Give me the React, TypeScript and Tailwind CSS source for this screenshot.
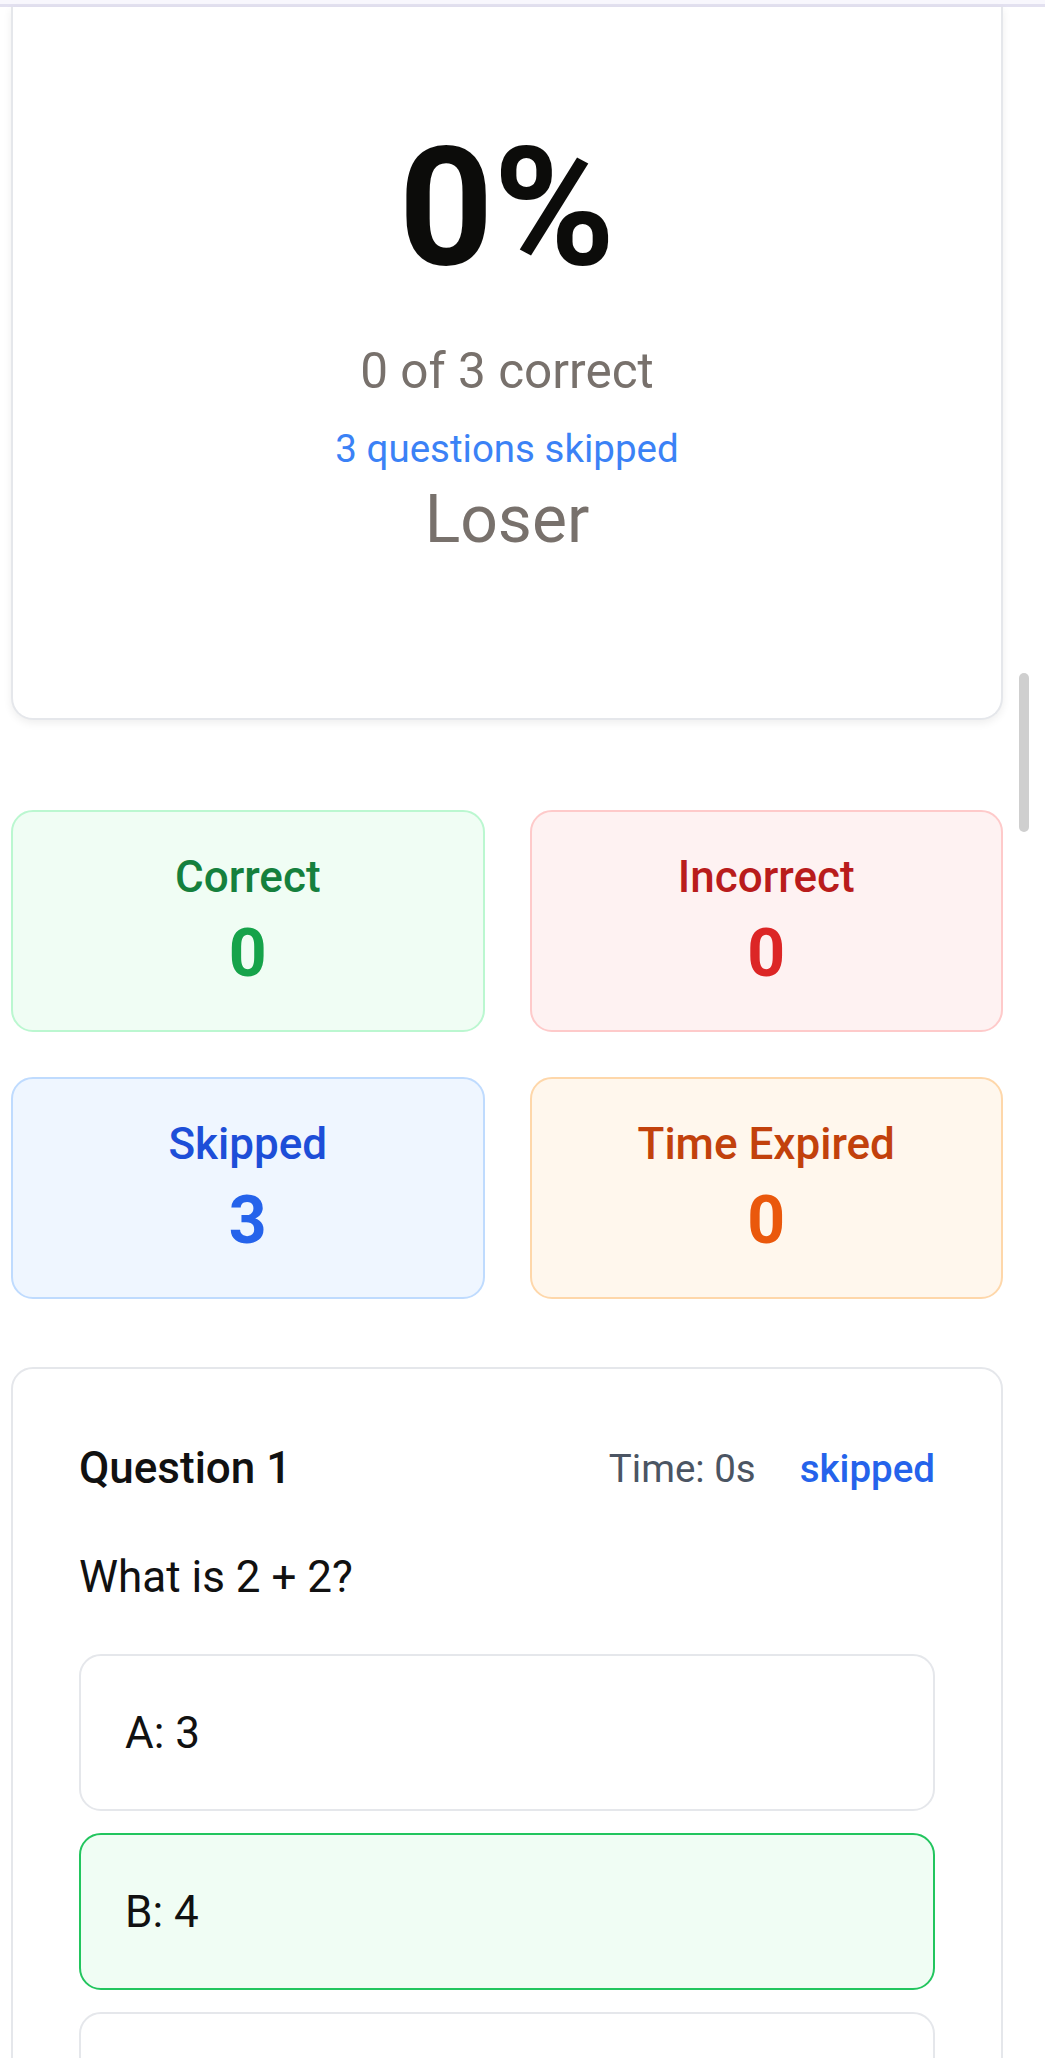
import React from "react";

const stats = [
  { label: "Correct", value: "0", box: "bg-[#f0fdf4] border-[#bbf7d0]", title: "text-[#15803d]", num: "text-[#16a34a]" },
  { label: "Incorrect", value: "0", box: "bg-[#fef2f2] border-[#fecaca]", title: "text-[#b91c1c]", num: "text-[#dc2626]" },
  { label: "Skipped", value: "3", box: "bg-[#eff6ff] border-[#bfdbfe]", title: "text-[#1d4ed8]", num: "text-[#2563eb]" },
  { label: "Time Expired", value: "0", box: "bg-[#fff7ed] border-[#fed7aa]", title: "text-[#c2410c]", num: "text-[#ea580c]" },
];

const options = [
  { text: "A: 3", correct: false },
  { text: "B: 4", correct: true },
  { text: "", correct: false },
];

export default function App() {
  return (
    <div className="relative min-h-[2058px] overflow-hidden bg-white font-['Roboto',sans-serif]">
      <div className="h-[7px] bg-[#f8f7fd] border-b-[3px] border-[#e3e1f0]" />
      <div className="w-[1003px] pl-[11px] pb-[200px]">
        {/* Score card */}
        <div className="flex flex-col items-center rounded-b-[22px] border-2 border-t-0 border-[#e5e7eb] bg-white pt-[118px] pb-[154px] text-center shadow-[0_3px_8px_rgba(0,0,0,0.07)]">
          <div className="text-[165px] font-bold leading-none text-[#0c0c0a]">0%</div>
          <div className="mt-[43px] text-[49.5px] leading-[77px] text-[#78716c]">0 of 3 correct</div>
          <div className="mt-[11px] text-[38.5px] leading-[55px] text-[#3b82f6]">3 questions skipped</div>
          <div className="text-[66px] leading-[88px] text-[#78716c]">Loser</div>
        </div>

        {/* Stats */}
        <div className="mt-[90px] grid grid-cols-2 gap-x-[45px] gap-y-[45px]">
          {stats.map((s) => (
            <div key={s.label} className={`rounded-[22px] border-2 p-[32px] text-center ${s.box}`}>
              <div className={`text-[44px] font-medium leading-[66px] ${s.title}`}>{s.label}</div>
              <div className={`text-[66px] font-bold leading-[88px] ${s.num}`}>{s.value}</div>
            </div>
          ))}
        </div>

        {/* Question card */}
        <div className="mt-[68px] rounded-[22px] border-2 border-[#e5e7eb] bg-white p-[66px]">
          <div className="flex items-center justify-between">
            <div className="text-[44px] font-medium leading-[66px] text-[#111111]">Question 1</div>
            <div className="flex items-center gap-[44px]">
              <span className="text-[38.5px] leading-[55px] text-[#4b5563]">Time: 0s</span>
              <span className="text-[38.5px] font-medium leading-[55px] text-[#2563eb]">skipped</span>
            </div>
          </div>
          <div className="mt-[43px] text-[44px] leading-[66px] text-[#111111]">What is 2 + 2?</div>
          <div className="mt-[44px] flex flex-col gap-[22px]">
            {options.map((o, i) => (
              <div
                key={i}
                className={
                  o.correct
                    ? "h-[157px] rounded-[22px] border-2 border-[#22c55e] bg-[#f0fdf4] p-[44px] text-[44px] leading-[66px] text-[#111111]"
                    : "h-[157px] rounded-[22px] border-2 border-[#e5e7eb] bg-white p-[44px] text-[44px] leading-[66px] text-[#111111]"
                }
              >
                {o.text}
              </div>
            ))}
          </div>
        </div>
      </div>

      {/* overlay scrollbar thumb */}
      <div className="absolute left-[1019px] top-[673px] h-[159px] w-[10px] rounded-full bg-[#cfcfcf]" />
    </div>
  );
}
